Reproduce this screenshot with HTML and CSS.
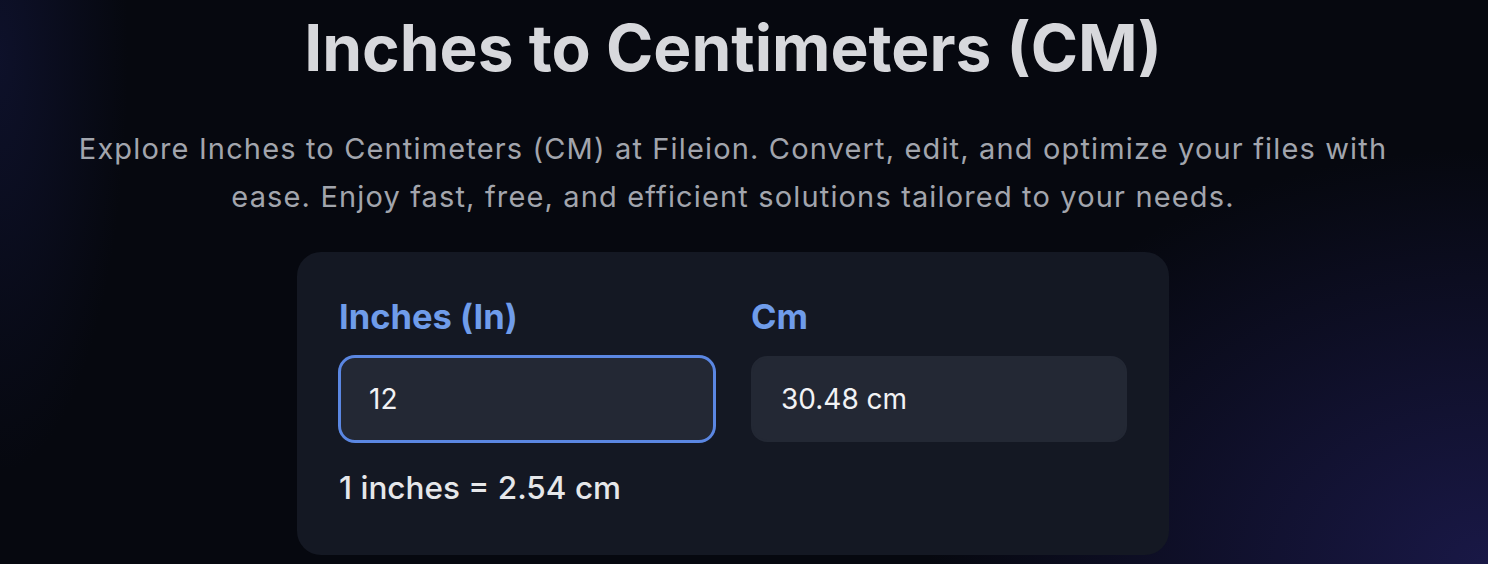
FILE: index.html
```html
<!DOCTYPE html>
<html lang="en">
<head>
    <meta charset="UTF-8">
    <meta name="viewport" content="width=device-width, initial-scale=1.0">
    <title>Inches to Centimeters (CM)</title>
    <link rel="stylesheet" href="styles.css">
</head>
<body>
    <main class="page">
        <h1 class="title">Inches to Centimeters (CM)</h1>
        <p class="lead">Explore Inches to Centimeters (CM) at Fileion. Convert, edit, and optimize your files with ease. Enjoy fast, free, and efficient solutions tailored to your needs.</p>

        <section class="card">
            <div class="fields">
                <div class="field">
                    <label for="inches">Inches (In)</label>
                    <input type="text" id="inches" class="box active" value="12">
                </div>
                <div class="field">
                    <label for="cm">Cm</label>
                    <input type="text" id="cm" class="box" value="30.48 cm" readonly>
                </div>
            </div>
            <p class="rate">1 inches = 2.54 cm</p>
        </section>
    </main>
</body>
</html>
```

FILE: styles.css
```css
html, body { height: 100%; }
body {
    margin: 0;
    font-family: Inter, "Noto Sans", Arial, sans-serif;
    color: #d6d7db;
    background:
        radial-gradient(ellipse 700px 520px at 100% 100%, rgba(30, 28, 84, 0.8), transparent 80%),
        radial-gradient(ellipse 160px 520px at 0% 10%, rgba(20, 24, 64, 0.55), transparent 80%),
        #06080f;
    overflow: hidden;
}
.page { display: flex; flex-direction: column; align-items: center; padding: 10px 22px 0 0; }
.title { margin: 0; font-size: 64px; font-weight: 700; line-height: 76px; color: #d7d8dc; }
.lead { margin: 39px 0 0; max-width: 1340px; text-align: center; font-size: 29px; line-height: 48px; letter-spacing: 1.15px; color: #a2a5ad; }
.card { margin-top: 31px; width: 872px; box-sizing: border-box; padding: 40px 42px 44px; background: #141823; border-radius: 24px; }
.fields { display: grid; grid-template-columns: 1fr 1fr; gap: 36px; }
.field label { display: block; font-size: 34.5px; font-weight: 700; line-height: 50px; color: #6f9cea; margin-bottom: 14px; }
.box {
    display: block; width: 100%; height: 86px; box-sizing: border-box;
    padding: 0 28px; border: 2px solid #232834; border-radius: 16px;
    background: #232834; color: #f2f3f5;
    font-family: inherit; font-size: 28px; outline: none;
}
.box.active { border-color: #5b87e2; box-shadow: 0 0 0 1px #5b87e2; }
.rate { margin: 23px 0 0; font-size: 31.5px; font-weight: 500; line-height: 46px; color: #e6e7ea; }
```
